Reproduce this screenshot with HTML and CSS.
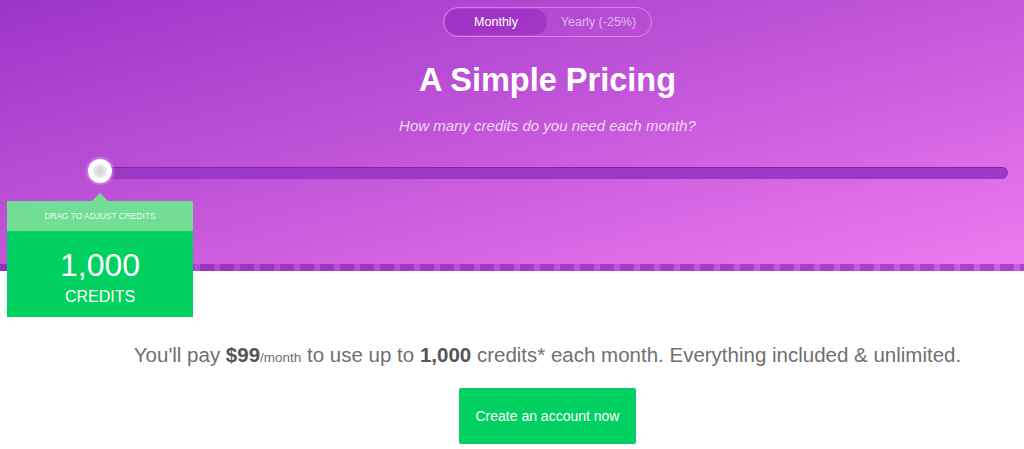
FILE: index.html
```html
<!DOCTYPE html>
<html>
<head>
<meta charset="utf-8">
<link rel="stylesheet" href="styles.css">
</head>
<body>
<header class="hero">
  <div class="hero-inner">
    <div class="toggle">
      <span class="toggle-opt active">Monthly</span>
      <span class="toggle-opt">Yearly (-25%)</span>
    </div>
    <h1 class="title">A Simple Pricing</h1>
    <p class="subtitle">How many credits do you need each month?</p>
  </div>
  <div class="slider">
    <div class="track"></div>
    <div class="thumb"></div>
    <div class="tip">
      <div class="tip-head">DRAG TO ADJUST CREDITS</div>
      <div class="tip-body">
        <div class="tip-num">1,000</div>
        <div class="tip-unit">CREDITS</div>
      </div>
    </div>
  </div>
  <div class="stripe"></div>
</header>
<main class="main">
  <p class="summary">You'll pay <b>$99</b><small>/month</small> to use up to <b>1,000</b> credits* each month. Everything included &amp; unlimited.</p>
  <a class="cta" href="#">Create an account now</a>
</main>
</body>
</html>
```

FILE: styles.css
```css
* { box-sizing: border-box; }
html, body { margin: 0; padding: 0; }
body {
  font-family: "Liberation Sans", Arial, Helvetica, sans-serif;
  background: #fff;
  width: 1024px;
  height: 449px;
  overflow: hidden;
}
.hero {
  position: relative;
  height: 271px;
  background: linear-gradient(to bottom right, #9c34c7 0%, #c457da 50%, #ee7bf0 100%);
  padding-top: 7px;
}
.hero-inner {
  padding-left: 71px;
  display: flex;
  flex-direction: column;
  align-items: center;
}
.toggle {
  display: flex;
  width: 209px;
  height: 30px;
  border: 1px solid rgba(255,255,255,0.35);
  border-radius: 15px;
  padding: 1px;
}
.toggle-opt {
  display: flex;
  align-items: center;
  justify-content: center;
  font-size: 12.5px;
  color: rgba(255,255,255,0.62);
  flex: 1 1 0;
  border-radius: 14px;
}
.toggle-opt.active {
  flex: 0 0 102px;
  color: #fff;
  background: rgba(125,20,175,0.35);
}
.title {
  margin: 23px 0 0;
  font-size: 32.5px;
  line-height: 40px;
  font-weight: bold;
  color: #fff;
}
.subtitle {
  margin: 16px 0 0;
  font-size: 15px;
  line-height: 20px;
  font-style: italic;
  color: rgba(255,255,255,0.78);
}
.slider {
  position: relative;
  margin: 31px 16px 0 90px;
  height: 12px;
}
.track {
  height: 12px;
  border-radius: 6px;
  background: #9d37c5;
  box-shadow: inset 0 1px 0 rgba(80,0,120,0.35);
}
.thumb {
  position: absolute;
  left: -2px;
  top: -8px;
  width: 24px;
  height: 24px;
  border-radius: 50%;
  background: radial-gradient(circle, #d2d2d2 0, #dedede 4px, #eeeeee 6.5px, #fff 8px);
  box-shadow: 0 0 0 2px rgba(255,255,255,0.12), 0 0 5px rgba(255,255,255,0.35);
}
.tip {
  position: absolute;
  left: -83px;
  top: 34px;
  width: 186px;
  text-align: center;
  color: #fff;
  z-index: 2;
}
.tip::before {
  content: "";
  position: absolute;
  left: 85px;
  top: -8px;
  border-left: 8px solid transparent;
  border-right: 8px solid transparent;
  border-bottom: 8px solid #72dd94;
}
.tip-head {
  height: 30px;
  background: #72dd94;
  font-size: 8.4px;
  line-height: 30px;
  color: rgba(255,255,255,0.9);
}
.tip-body {
  height: 86px;
  background: #00d161;
  padding-top: 16px;
}
.tip-num {
  font-size: 32px;
  line-height: 36px;
  font-weight: normal;
}
.tip-unit {
  font-size: 16px;
  line-height: 20px;
  margin-top: 4px;
}
.stripe {
  position: absolute;
  left: 0;
  right: 0;
  bottom: 0;
  height: 7px;
  background: repeating-linear-gradient(90deg, rgba(110,10,165,0.5) 0 14px, rgba(110,10,165,0.25) 14px 20px);
}
.main {
  padding-left: 71px;
  display: flex;
  flex-direction: column;
  align-items: center;
}
.summary {
  margin: 71px 0 0;
  font-size: 20.5px;
  line-height: 26px;
  color: #707070;
  white-space: nowrap;
}
.summary b { color: #555; }
.summary small { font-size: 13.5px; }
.cta {
  margin-top: 17px;
  display: flex;
  align-items: center;
  justify-content: center;
  width: 177px;
  height: 56px;
  background: #00d161;
  color: #fff;
  font-size: 14px;
  text-decoration: none;
  border-radius: 2px;
}
```
